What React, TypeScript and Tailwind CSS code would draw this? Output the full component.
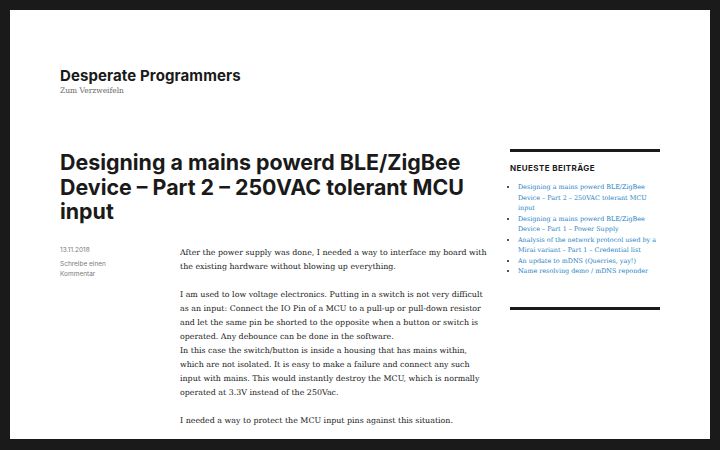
const recentPosts = [
  'Designing a mains powerd BLE/ZigBee Device – Part 2 – 250VAC tolerant MCU input',
  'Designing a mains powerd BLE/ZigBee Device – Part 1 – Power Supply',
  'Analysis of the network protocol used by a Mirai variant – Part 1 – Credential list',
  'An update to mDNS (Querries, yay!)',
  'Name resolving demo / mDNS reponder',
];

const sans = { fontFamily: 'Inter, "Open Sans", sans-serif' };
const serif = { fontFamily: '"DejaVu Serif", "Liberation Serif", serif' };

export default function App() {
  return (
    <div className="h-[450px] w-[720px] overflow-hidden bg-[#1a1a1a] p-[10px] pb-[11px]">
      <div className="h-full w-full bg-white px-[50px] pt-[57px]">
        <header style={sans}>
          <h1 className="text-[15px] font-bold leading-[18px] tracking-[0.1px] text-[#1a1a1a]">
            Desperate Programmers
          </h1>
          <p className="mt-[1px] text-[7.5px] leading-[10px] text-[#686868]" style={serif}>
            Zum Verzweifeln
          </p>
        </header>

        <div className="mt-[54px] flex">
          <main className="w-[420px]">
            <h2
              className="text-[21.4px] font-bold leading-[24.5px] text-[#1a1a1a]"
              style={sans}
            >
              Designing a mains powerd BLE/ZigBee Device – Part 2 – 250VAC tolerant MCU input
            </h2>
            <div className="mt-[22px] flex">
              <div className="w-[120px] shrink-0 text-[6.5px] leading-[10px] text-[#7a7a7a]" style={sans}>
                <p className="mt-[-1px]">13.11.2018</p>
                <p className="mt-[4px] w-[60px]">Schreibe einen Kommentar</p>
              </div>
              <div className="w-[312px] shrink-0 text-[7.9px] leading-[14px] text-[#1a1a1a]" style={serif}>
                <p>
                  After the power supply was done, I needed a way to interface my board with the
                  existing hardware without blowing up everything.
                </p>
                <p className="mt-[14px]">
                  I am used to low voltage electronics. Putting in a switch is not very difficult
                  as an input: Connect the IO Pin of a MCU to a pull-up or pull-down resistor and
                  let the same pin be shorted to the opposite when a button or switch is operated.
                  Any debounce can be done in the software.
                  <br />
                  In this case the switch/button is inside a housing that has mains within, which
                  are not isolated. It is easy to make a failure and connect any such input with
                  mains. This would instantly destroy the MCU, which is normally operated at 3.3V
                  instead of the 250Vac.
                </p>
                <p className="mt-[14px]">
                  I needed a way to protect the MCU input pins against this situation.
                </p>
              </div>
            </div>
          </main>

          <aside className="ml-[30px] mt-[-1px] w-[150px]">
            <section className="border-t-[3px] border-[#1a1a1a] pt-[10px]">
              <h3
                className="text-[8px] font-bold uppercase leading-[12px] tracking-[0.4px] text-[#1a1a1a]"
                style={sans}
              >
                Neueste Beiträge
              </h3>
              <ul
                className="mt-[8px] list-disc pl-[8px] text-[6.4px] leading-[10.5px] text-[#2682c4] marker:text-[#1a1a1a]"
                style={serif}
              >
                {recentPosts.map((title) => (
                  <li key={title}>{title}</li>
                ))}
              </ul>
            </section>
            <div className="mt-[30px] border-t-[3px] border-[#1a1a1a]" />
          </aside>
        </div>
      </div>
    </div>
  );
}
